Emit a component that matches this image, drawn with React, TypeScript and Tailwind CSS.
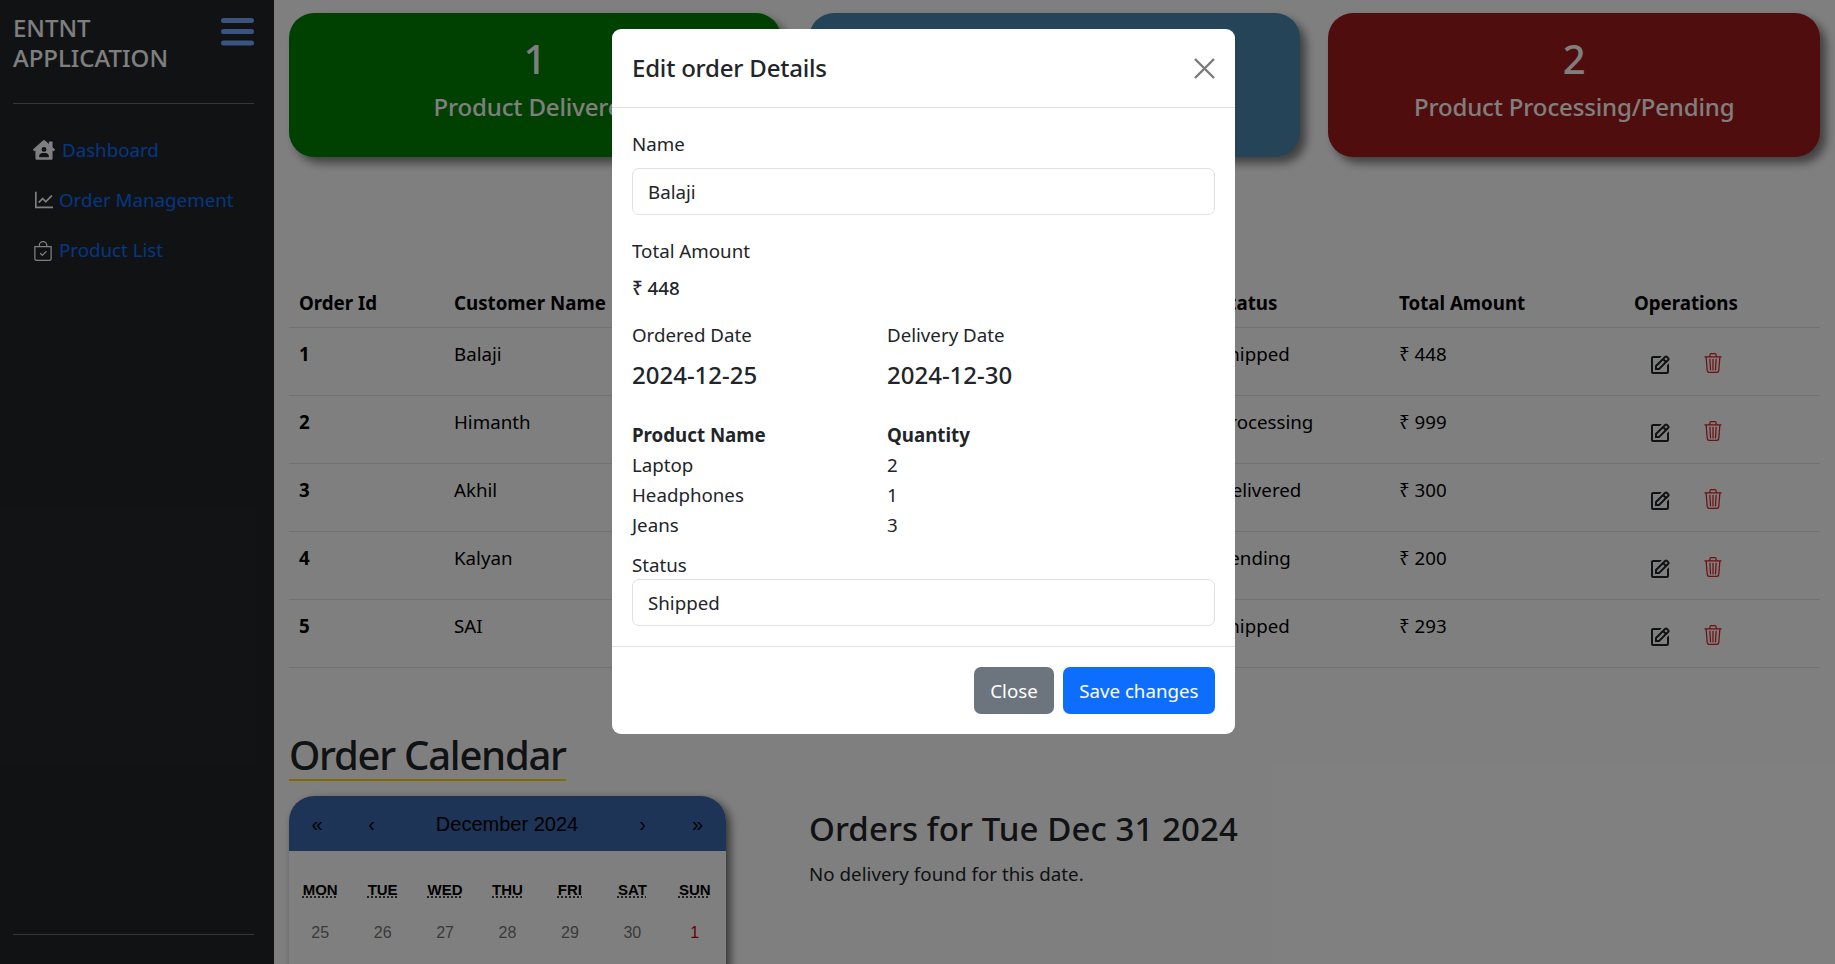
import { FaHouseUser } from "react-icons/fa";
import { AiOutlineLineChart } from "react-icons/ai";
import { BsBagCheck, BsTrash3 } from "react-icons/bs";
import { BiEdit } from "react-icons/bi";

const orders = [
  { id: 1, name: "Balaji", status: "Shipped", total: 448 },
  { id: 2, name: "Himanth", status: "Processing", total: 999 },
  { id: 3, name: "Akhil", status: "Delivered", total: 300 },
  { id: 4, name: "Kalyan", status: "Pending", total: 200 },
  { id: 5, name: "SAI", status: "Shipped", total: 293 },
];

const products = [
  { name: "Laptop", qty: 2 },
  { name: "Headphones", qty: 1 },
  { name: "Jeans", qty: 3 },
];

const days = ["MON", "TUE", "WED", "THU", "FRI", "SAT", "SUN"];
const dates = [25, 26, 27, 28, 29, 30, 1];
const rowCols = "grid grid-cols-[165px_764px_181px_235px_1fr] border-b border-[#dee2e6]";

function Sidebar() {
  return (
    <aside className="flex h-full w-[274px] shrink-0 flex-col bg-[#212529] pr-[20px] pl-[13px]">
      <div className="flex h-[104px] items-start justify-between border-b border-[#6b6e72]">
        <h1 className="mt-[13px] text-[24px] leading-[30px] font-medium text-white">
          ENTNT
          <br />
          APPLICATION
        </h1>
        <svg className="mt-[17px] text-[#75a9ff]" width="33" height="30" viewBox="0 0 33 30" fill="none" stroke="currentColor" strokeWidth="5" strokeLinecap="round">
          <path d="M2.5 3.5h28M2.5 14.5h28M2.5 26h28" />
        </svg>
      </div>
      <nav className="flex flex-col gap-[25px] pt-[33px] pl-[20px] text-[18.72px] leading-[25px] text-[#0d6efd]">
        <a className="flex items-center gap-[7px]">
          <FaHouseUser className="text-white" size={22} /> Dashboard
        </a>
        <a className="-ml-[1px] flex items-center gap-[3px]">
          <AiOutlineLineChart className="text-white" size={24} /> Order Management
        </a>
        <a className="flex items-center gap-[6px]">
          <BsBagCheck className="mt-[3px] text-white" size={20} /> Product List
        </a>
      </nav>
      <div className="mt-auto mb-[29px] border-b border-[#6b6e72]" />
    </aside>
  );
}

function StatCard({ value, label, color }: { value: number; label: string; color: string }) {
  return (
    <div className={`flex h-[144px] flex-1 flex-col items-center rounded-[25px] pt-[19px] text-white shadow-[6px_6px_10px_rgba(0,0,0,0.5)] ${color}`}>
      <div className="text-[40px] leading-[54px] font-medium">{value}</div>
      <div className="mt-[5px] text-[24px] leading-[32px] font-medium tracking-[-0.15px]">{label}</div>
    </div>
  );
}

function OrderTable() {
  return (
    <div className="mt-[122px] text-[18.72px] text-black">
      <div className={`${rowCols} h-[49px] items-center font-bold`}>
        <div className="pl-[10px]">Order Id</div>
        <div>Customer Name</div>
        <div>Status</div>
        <div>Total Amount</div>
        <div>Operations</div>
      </div>
      {orders.map((o) => (
        <div key={o.id} className={`${rowCols} h-[68px] pt-[12px]`}>
          <div className="pl-[10px] font-bold">{o.id}</div>
          <div>{o.name}</div>
          <div>{o.status}</div>
          <div>₹ {o.total}</div>
          <div className="flex items-start gap-[31px] pt-[13px] pl-[14px]">
            <BiEdit className="text-[#212529]" size={24} />
            <BsTrash3 className="text-[#dc2020]" size={20} />
          </div>
        </div>
      ))}
    </div>
  );
}

function Calendar() {
  return (
    <div className="h-[300px] w-[437px] shrink-0 rounded-t-[25px] bg-white font-['Liberation_Sans',sans-serif] shadow-[4px_4px_10px_rgba(0,0,0,0.6)]">
      <div className="flex h-[55px] items-center rounded-t-[25px] bg-[#3a68ac] text-center text-[20px] text-black">
        <div className="w-[56px]">«</div>
        <div className="w-[53px]">‹</div>
        <div className="flex-1">December 2024</div>
        <div className="w-[53px]">›</div>
        <div className="w-[57px]">»</div>
      </div>
      <div className="grid grid-cols-7 pt-[28px] text-center text-[15px] font-bold text-black">
        {days.map((d) => (
          <div key={d}>
            <span className="underline decoration-dotted underline-offset-2">{d}</span>
          </div>
        ))}
      </div>
      <div className="grid grid-cols-7 pt-[19px] text-center text-[16px] text-[#757575]">
        {dates.map((d) => (
          <div key={d} className={d === 1 ? "text-[#d10000]" : ""}>
            {d}
          </div>
        ))}
      </div>
    </div>
  );
}

function EditModal() {
  return (
    <div className="absolute inset-0 bg-black/50 pl-[12px]">
      <div className="mx-auto mt-[29px] w-[623px] rounded-[9px] bg-white text-[18.72px] leading-[30px] text-[#212529]">
        <div className="flex h-[79px] items-center justify-between border-b border-[#dee2e6] px-[20px]">
          <div className="text-[24px] font-medium tracking-[-0.2px]">Edit order Details</div>
          <svg className="text-[#7a7a7a]" width="21" height="21" viewBox="0 0 21 21" stroke="currentColor" strokeWidth="2.4">
            <path d="M1 1l19 19M20 1L1 20" />
          </svg>
        </div>
        <div className="px-[20px] pt-[21px]">
          <div>Name</div>
          <div className="mt-[9px] flex h-[47px] items-center rounded-[7px] border border-[#dee2e6] px-[15px]">Balaji</div>
          <div className="mt-[21px]">Total Amount</div>
          <div className="mt-[7px] font-medium">₹ 448</div>
          <div className="mt-[17px] grid grid-cols-[255px_1fr]">
            <div>Ordered Date</div>
            <div>Delivery Date</div>
            <div className="mt-[10px] text-[24px] font-medium">2024-12-25</div>
            <div className="mt-[10px] text-[24px] font-medium">2024-12-30</div>
          </div>
          <div className="mt-[30px] grid grid-cols-[255px_1fr]">
            <div className="font-bold">Product Name</div>
            <div className="font-bold">Quantity</div>
            {products.map((p) => (
              <div key={p.name} className="contents">
                <div>{p.name}</div>
                <div>{p.qty}</div>
              </div>
            ))}
          </div>
          <div className="mt-[11px] leading-[28px]">Status</div>
          <div className="flex h-[47px] items-center rounded-[7px] border border-[#dee2e6] px-[15px]">Shipped</div>
        </div>
        <div className="mt-[20px] flex justify-end gap-[9px] border-t border-[#dee2e6] p-[20px]">
          <button className="h-[47px] rounded-[7px] bg-[#6c757d] px-[16px] text-white">Close</button>
          <button className="h-[47px] rounded-[7px] bg-[#0d6efd] px-[16.5px] text-white">Save changes</button>
        </div>
      </div>
    </div>
  );
}

export default function App() {
  return (
    <div className="relative flex h-screen overflow-hidden bg-white font-['Noto_Sans',sans-serif]">
      <Sidebar />
      <main className="min-w-0 flex-1 px-[15px] pt-[13px]">
        <div className="flex gap-[28px]">
          <StatCard value={1} label="Product Delivered" color="bg-[#008000]" />
          <StatCard value={2} label="Product Shipped" color="bg-[#4a88b0]" />
          <StatCard value={2} label="Product Processing/Pending" color="bg-[#a01a1a]" />
        </div>
        <OrderTable />
        <h2 className="mt-[62px] w-fit border-b-2 border-[#ffd700] text-[40px] leading-[49px] font-medium tracking-[-1.25px] text-[#212529]">
          Order Calendar
        </h2>
        <div className="mt-[15px] flex">
          <Calendar />
          <div className="pt-[11px] pl-[83px]">
            <div className="text-[33px] leading-[44px] font-medium tracking-[0.1px] text-[#212529]">Orders for Tue Dec 31 2024</div>
            <div className="mt-[9px] text-[18.72px] tracking-[0.05px] text-[#212529]">No delivery found for this date.</div>
          </div>
        </div>
      </main>
      <EditModal />
    </div>
  );
}
